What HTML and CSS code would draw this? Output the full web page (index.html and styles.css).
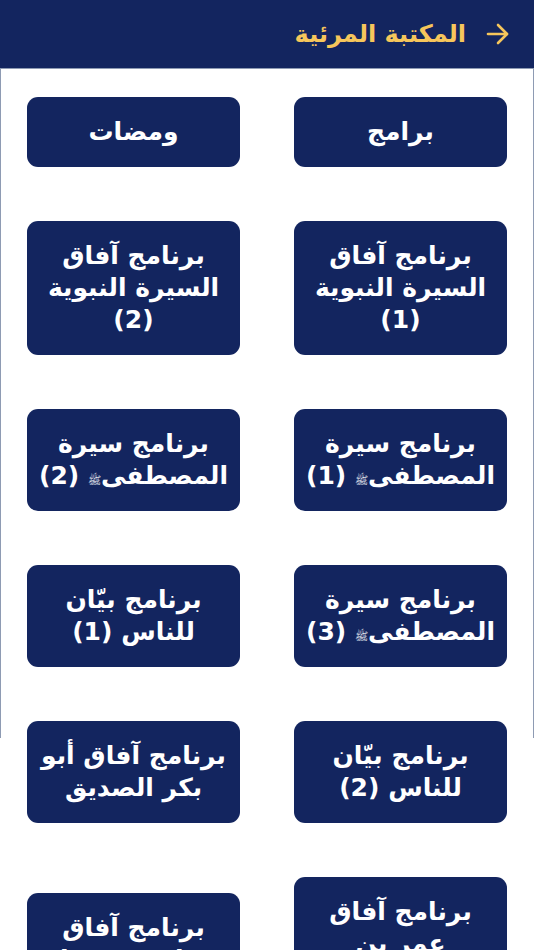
FILE: index.html
```html
<!DOCTYPE html>
<html lang="ar" dir="rtl">
<head>
    <meta charset="UTF-8">
    <meta name="viewport" content="width=device-width, initial-scale=1.0">
    <title>المكتبة المرئية</title>
    <link rel="stylesheet" href="styles.css">
</head>
<body>
    <header class="top-bar">
        <a class="back" href="#">
            <svg width="24" height="22" viewBox="0 0 24 22" fill="none" stroke="currentColor" stroke-width="2.6" stroke-linecap="round" stroke-linejoin="round">
                <path d="M2 11h19"/>
                <path d="M12 2l9 9-9 9"/>
            </svg>
        </a>
        <h1>المكتبة المرئية</h1>
    </header>

    <main class="page">
        <div class="grid">
            <a class="tile" href="#">برامج</a>
            <a class="tile" href="#">ومضات</a>
            <a class="tile" href="#">برنامج آفاق<br>السيرة النبوية<br>(1)</a>
            <a class="tile" href="#">برنامج آفاق<br>السيرة النبوية<br>(2)</a>
            <a class="tile" href="#">برنامج سيرة<br>المصطفى<span class="salla">ﷺ</span> (1)</a>
            <a class="tile" href="#">برنامج سيرة<br>المصطفى<span class="salla">ﷺ</span> (2)</a>
            <a class="tile" href="#">برنامج سيرة<br>المصطفى<span class="salla">ﷺ</span> (3)</a>
            <a class="tile" href="#">برنامج بيّان<br>للناس (1)</a>
            <a class="tile" href="#">برنامج بيّان<br>للناس (2)</a>
            <a class="tile" href="#">برنامج آفاق أبو<br>بكر الصديق</a>
            <a class="tile" href="#">برنامج آفاق<br>عمر بن<br>الخطاب</a>
            <a class="tile" href="#">برنامج آفاق<br>عثمان بن عفان</a>
        </div>
    </main>
</body>
</html>
```

FILE: styles.css
```css
body {
    margin: 0;
    font-family: "DejaVu Sans", "Noto Sans", sans-serif;
    background: #fff;
}
.top-bar {
    display: flex;
    align-items: center;
    height: 69px;
    padding: 0 24px;
    background-color: #13255f;
    color: #f6c65b;
    border-bottom: 1px solid #8e9bb3;
    box-sizing: border-box;
}
.back {
    display: flex;
    color: #f6c65b;
    margin-left: 20px;
}
.top-bar h1 {
    margin: 0;
    font-size: 24px;
    font-weight: bold;
}
.page {
    background:
        linear-gradient(#8e9bb3, #8e9bb3) left top / 1px 669px no-repeat,
        linear-gradient(#8e9bb3, #8e9bb3) right top / 1px 669px no-repeat;
}
.grid {
    display: grid;
    grid-template-columns: 1fr 1fr;
    align-items: center;
    gap: 54px;
    padding: 28px 27px;
}
.tile {
    display: block;
    padding: 19px 4px;
    background-color: #13255f;
    border-radius: 11px;
    color: #fff;
    font-size: 25px;
    font-weight: bold;
    line-height: 32px;
    text-align: center;
    text-decoration: none;
    white-space: nowrap;
}
.salla {
    font-size: 11px;
    font-weight: normal;
    line-height: 0;
}
```
